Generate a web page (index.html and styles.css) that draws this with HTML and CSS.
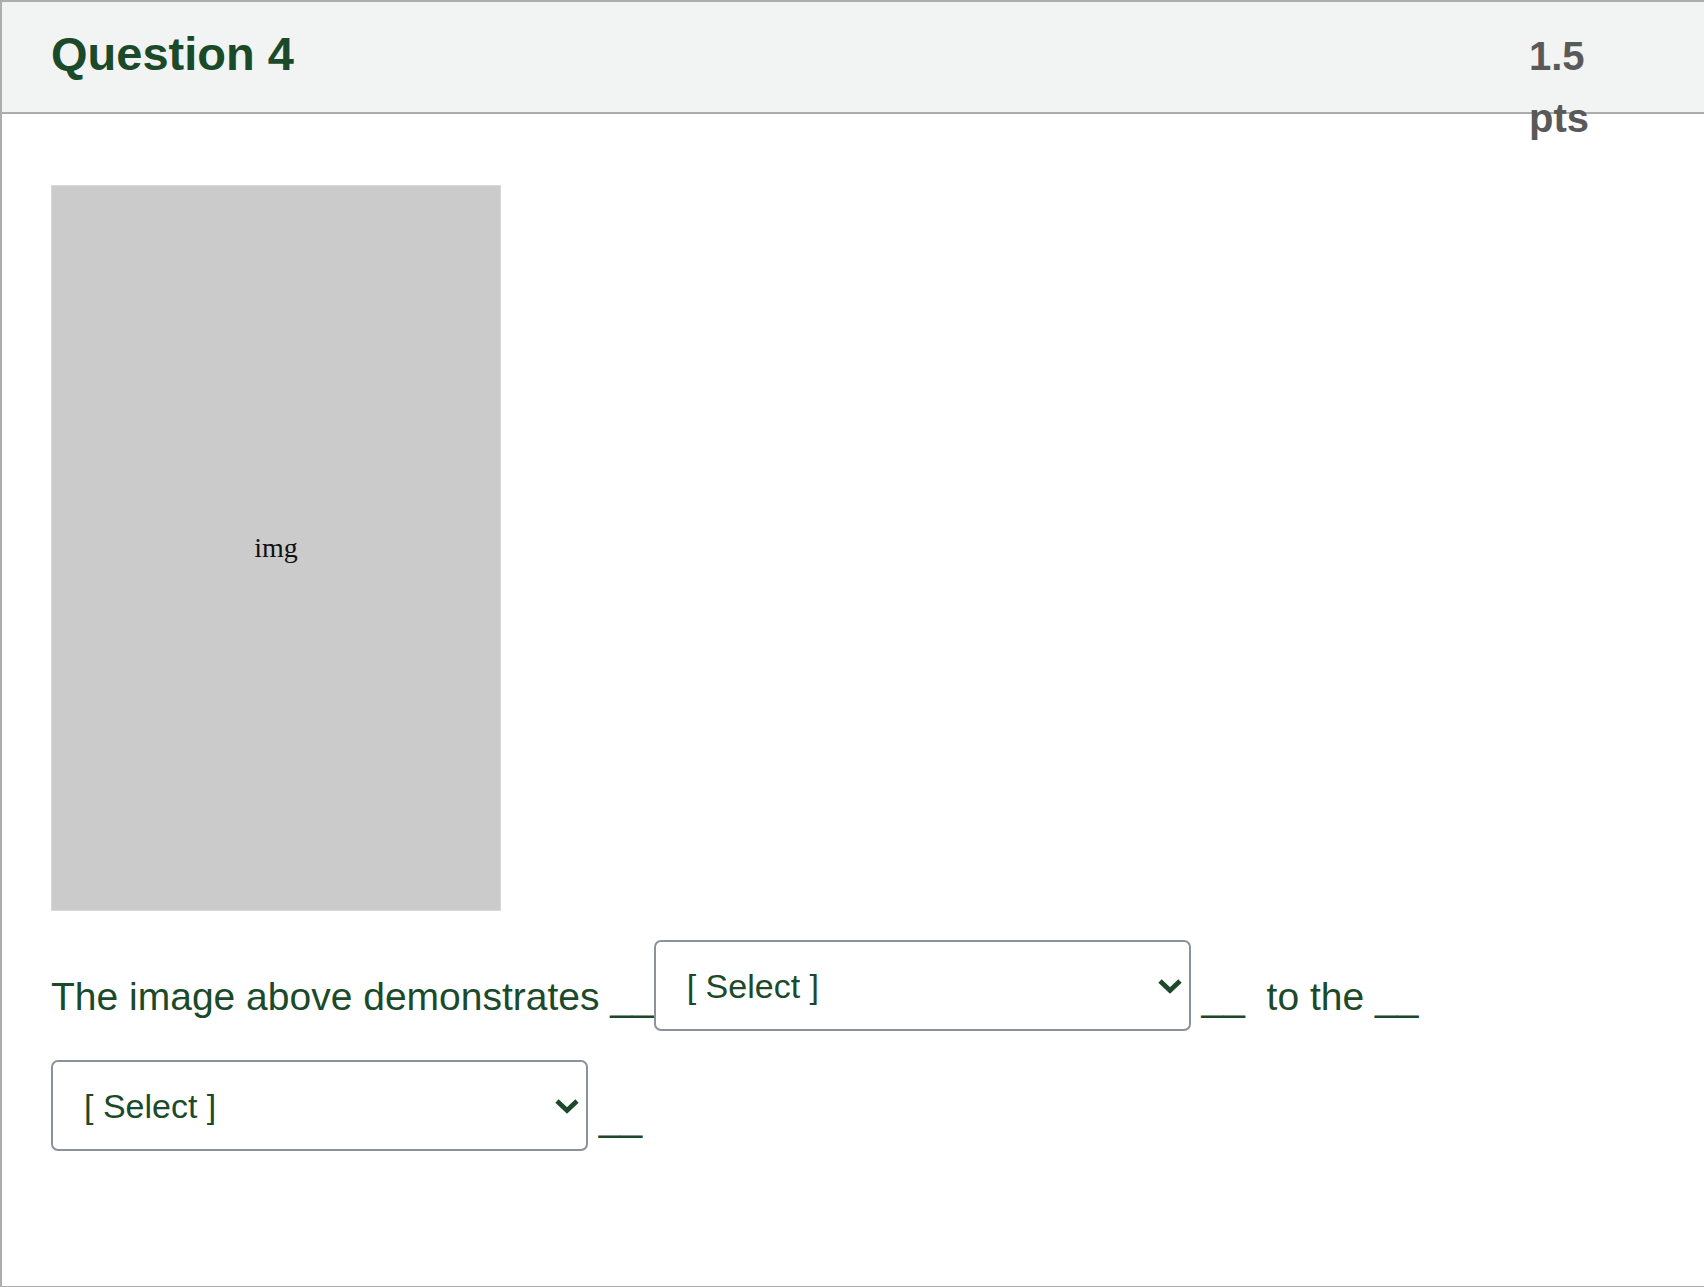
FILE: index.html
```html
<!DOCTYPE html>
<html lang="en">
<head>
<meta charset="utf-8">
<title>Question 4</title>
<link rel="stylesheet" href="styles.css">
</head>
<body>
<div class="card">
  <div class="card-header">
    <h2 class="title">Question 4</h2>
    <div class="points">1.5 pts</div>
  </div>
  <div class="card-body">
    <div class="img-placeholder">img</div>
    <p class="question">The image above demonstrates __<span class="select-wrap"><select class="dropdown"><option>[ Select ]</option></select><svg class="chev" width="26" height="18" viewBox="0 0 26 18"><path d="M3 4 L13 13.5 L23 4" fill="none" stroke="#1b4a2a" stroke-width="4.8" stroke-linejoin="miter"/></svg></span> __ &nbsp;to the __ <span class="select-wrap"><select class="dropdown"><option>[ Select ]</option></select><svg class="chev" width="26" height="18" viewBox="0 0 26 18"><path d="M3 4 L13 13.5 L23 4" fill="none" stroke="#1b4a2a" stroke-width="4.8" stroke-linejoin="miter"/></svg></span> __</p>
  </div>
</div>
</body>
</html>
```
FILE: styles.css
```css
html, body {
  margin: 0;
  padding: 0;
  background: #ffffff;
}

.card {
  box-sizing: border-box;
  width: 1704px;
  border: 2px solid #adadad;
  border-right: none;
  font-family: "Liberation Sans", Arial, sans-serif;
}

.card-header {
  box-sizing: border-box;
  height: 112px;
  display: flex;
  align-items: baseline;
  padding: 22px 55px 0 49px;
  background: #f2f3f3;
  border-bottom: 2px solid #adadad;
}

.title {
  flex: 1;
  margin: 0;
  font-size: 47px;
  line-height: 60px;
  font-weight: bold;
  color: #1b4a2a;
}

.points {
  width: 120px;
  font-size: 40px;
  line-height: 62px;
  font-weight: bold;
  color: #595959;
}

.card-body {
  padding: 71px 49px 120px 49px;
}

.img-placeholder {
  box-sizing: border-box;
  width: 450px;
  height: 726px;
  margin-bottom: 15px;
  background: #cbcbcb;
  border: 1px solid #d9d9d9;
  display: flex;
  align-items: center;
  justify-content: center;
  font-family: "Liberation Serif", "Times New Roman", serif;
  font-size: 28px;
  color: #111111;
}

.question {
  margin: 0;
  font-size: 39px;
  line-height: 1.5;
  color: #1b4a2a;
}

.select-wrap {
  position: relative;
  display: inline-block;
  vertical-align: 12px;
  margin: 14px 0 15px 0;
}

.dropdown {
  -webkit-appearance: none;
  appearance: none;
  box-sizing: border-box;
  width: 537px;
  height: 91px;
  margin: 0;
  padding: 0 40px 0 31px;
  border: 2px solid #8a929c;
  border-radius: 7px;
  background: #ffffff;
  font-family: "Liberation Sans", Arial, sans-serif;
  font-size: 34px;
  color: #1b4a2a;
  vertical-align: baseline;
}

.chev {
  position: absolute;
  right: 8px;
  top: 37px;
  pointer-events: none;
}
```
